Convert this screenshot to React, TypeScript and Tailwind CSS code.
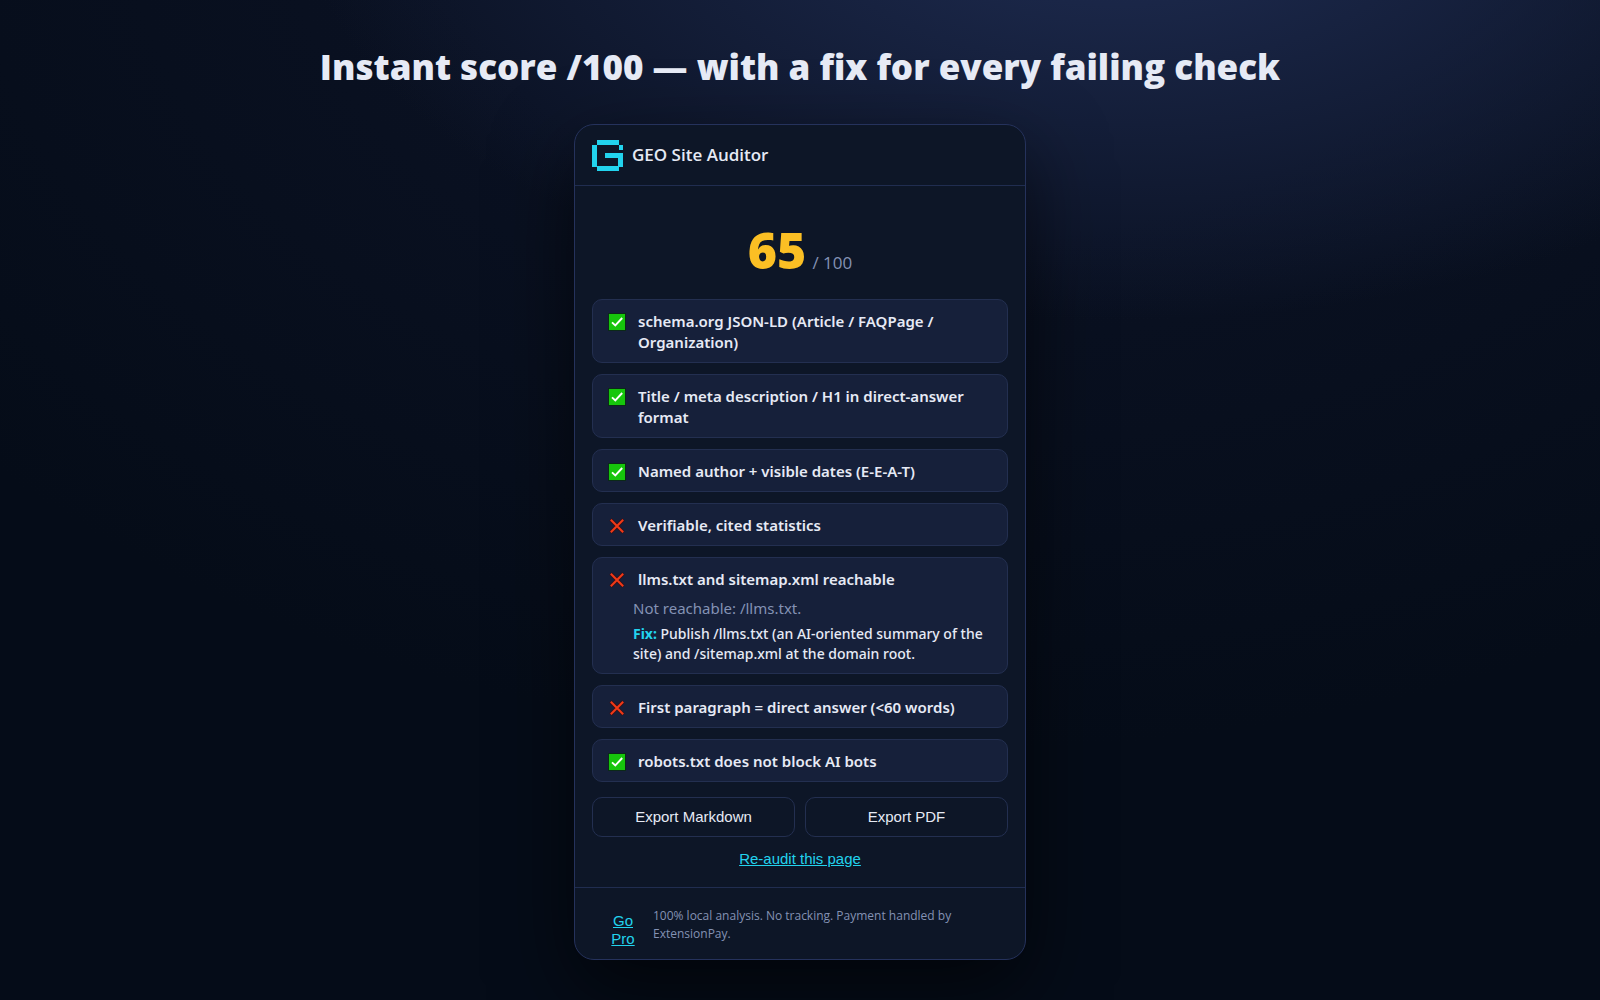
interface Check {
  label: string;
  passed: boolean;
  detail?: string;
  fix?: string;
}

const checks: Check[] = [
  { label: "schema.org JSON-LD (Article / FAQPage / Organization)", passed: true },
  { label: "Title / meta description / H1 in direct-answer format", passed: true },
  { label: "Named author + visible dates (E-E-A-T)", passed: true },
  { label: "Verifiable, cited statistics", passed: false },
  {
    label: "llms.txt and sitemap.xml reachable",
    passed: false,
    detail: "Not reachable: /llms.txt.",
    fix: "Publish /llms.txt (an AI-oriented summary of the site) and /sitemap.xml at the domain root.",
  },
  { label: "First paragraph = direct answer (<60 words)", passed: false },
  { label: "robots.txt does not block AI bots", passed: true },
];

function Logo() {
  return (
    <svg viewBox="0 0 31 31" className="size-[31px] shrink-0" fill="#22d3ee" shapeRendering="crispEdges" aria-hidden="true">
      <path d="M5 0h22v5H5zM0 5h5v22H0zM5 26h22v5H5zM27 5h4v5h-4zM13 13h18v5H13zM26 18h5v9h-5z" />
    </svg>
  );
}

function StatusIcon({ passed }: { passed: boolean }) {
  if (passed) {
    return (
      <svg viewBox="0 0 18 18" className="size-[18px]" role="img" aria-label="Passed">
        <rect x="0.5" y="0.5" width="17" height="17" fill="#16c60c" stroke="#0b2a18" />
        <path d="M4 9.4l3.3 3.1L14.2 5" fill="none" stroke="#fff" strokeWidth="1.9" />
      </svg>
    );
  }
  return (
    <svg viewBox="0 0 18 18" className="size-[18px]" role="img" aria-label="Failed">
      <path d="M2.6 2.6l12.8 12.8M15.4 2.6L2.6 15.4" fill="none" stroke="#3a1018" strokeWidth="3.6" />
      <path d="M2.8 2.8l12.4 12.4M15.2 2.8L2.8 15.2" fill="none" stroke="#f03a17" strokeWidth="2" />
    </svg>
  );
}

function CheckRow({ check }: { check: Check }) {
  return (
    <li className="rounded-[10px] border border-[#232f50] bg-[#16203a] px-[15px] pt-[11px] pb-[9px]">
      <div className="flex items-start gap-3">
        <span className="flex h-[21px] items-center">
          <StatusIcon passed={check.passed} />
        </span>
        <span className="text-[15px] leading-[21px] font-semibold">{check.label}</span>
      </div>
      {check.detail && <p className="mt-2 pl-[25px] text-[15px] leading-[20px] text-[#8492b4]">{check.detail}</p>}
      {check.fix && (
        <p className="mt-[6px] pl-[25px] text-[14px] leading-[20px] font-medium">
          <strong className="font-bold text-[#22d3ee]">Fix:</strong> {check.fix}
        </p>
      )}
    </li>
  );
}

export default function App() {
  return (
    <main className="min-h-screen bg-[#050c18] bg-[radial-gradient(820px_420px_at_70%_-10%,#1d2a55_0%,#1a2647_25%,transparent_100%),radial-gradient(1300px_850px_at_60%_-10%,#0a1122_0%,#0a1122_40%,transparent_100%)] px-4 pt-[42px] pb-10 font-['Open_Sans','Noto_Sans',sans-serif] text-[#e6eaf5]">
      <h1 className="text-center text-[35px] leading-[50px] font-extrabold">
        Instant score /100 — with a fix for every failing check
      </h1>

      <section className="mx-auto mt-8 w-full max-w-[452px] rounded-[20px] border border-[#25325c] bg-[#0d1627] shadow-[0_30px_80px_rgba(0,0,0,0.6)]">
        <header className="flex items-center gap-[9px] border-b border-[#202d50] px-[17px] py-[14px]">
          <Logo />
          <h2 className="text-[17px] leading-[32px] font-semibold">GEO Site Auditor</h2>
        </header>

        <div className="px-[17px] pt-8 pb-[18px]">
          <p className="flex items-baseline justify-center gap-[6px]">
            <strong className="text-[50px] leading-[64px] font-extrabold text-[#fbbf24]">65</strong>
            <span className="text-[17px] text-[#8492b4]">/ 100</span>
          </p>

          <ul className="mt-[17px] flex flex-col gap-[11px] font-['Noto_Sans',sans-serif]">
            {checks.map((check) => (
              <CheckRow key={check.label} check={check} />
            ))}
          </ul>

          <div className="mt-[15px] grid grid-cols-2 gap-[10px] font-['Liberation_Sans',sans-serif] text-[15px]">
            <button type="button" className="rounded-[10px] border border-[#232f50] py-2 leading-[22px]">
              Export Markdown
            </button>
            <button type="button" className="rounded-[10px] border border-[#232f50] py-2 leading-[22px]">
              Export PDF
            </button>
          </div>

          <div className="mt-3 flex justify-center">
            <button type="button" className="font-['Liberation_Sans',sans-serif] text-[15px] leading-[20px] text-[#22d3ee] underline">
              Re-audit this page
            </button>
          </div>
        </div>

        <footer className="flex items-start gap-[18px] border-t border-[#202d50] pt-[19px] pr-[50px] pb-[11px] pl-9">
          <a href="#pro" className="mt-[5px] w-6 shrink-0 text-center font-['Liberation_Sans',sans-serif] text-[15px] leading-[18px] text-[#22d3ee] underline">
            Go Pro
          </a>
          <p className="text-[12px] leading-[18px] text-[#8492b4]">
            100% local analysis. No tracking. Payment handled by ExtensionPay.
          </p>
        </footer>
      </section>
    </main>
  );
}
